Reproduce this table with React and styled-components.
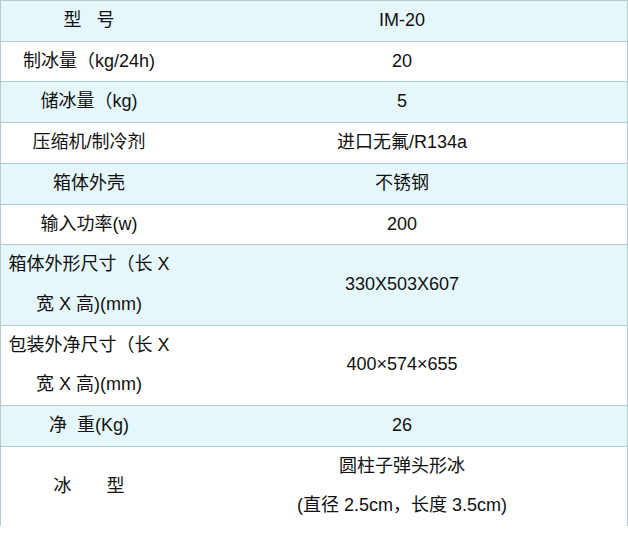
import React from 'react';
import styled, { createGlobalStyle } from 'styled-components';

const GlobalStyle = createGlobalStyle`
  body {
    margin: 0;
    background: #ffffff;
    font-family: "Liberation Sans", Arial, "Noto Sans CJK SC", sans-serif;
  }
`;

const SpecTable = styled.div`
  width: 628px;
  box-sizing: border-box;
  border: 1px solid #b3cad4;
  border-bottom: none;
  color: #111;
  font-size: 18px;
  line-height: 39.7px;
`;

const Row = styled.div`
  display: grid;
  grid-template-columns: 176px 1fr;
  background: ${(p) => (p.$shaded ? '#e6f7fc' : '#ffffff')};
  border-bottom: ${(p) => (p.$last ? 'none' : '1px solid #b3cad4')};
`;

const Cell = styled.div`
  display: flex;
  flex-direction: column;
  align-items: center;
  justify-content: center;
  text-align: center;
`;

const specs = [
  { label: '型\u00a0\u00a0\u00a0号', value: 'IM-20' },
  { label: '制冰量（kg/24h)', value: '20' },
  { label: '储冰量（kg)', value: '5' },
  { label: '压缩机/制冷剂', value: '进口无氟/R134a' },
  { label: '箱体外壳', value: '不锈钢' },
  { label: '输入功率(w)', value: '200' },
  { label: '箱体外形尺寸（长 X 宽 X 高)(mm)', value: '330X503X607' },
  { label: '包装外净尺寸（长 X 宽 X 高)(mm)', value: '400×574×655' },
  { label: '净\u00a0\u00a0重(Kg)', value: '26' },
  {
    label: '冰\u00a0\u00a0\u00a0\u00a0\u00a0\u00a0\u00a0型',
    value: ['圆柱子弹头形冰', '(直径 2.5cm，长度 3.5cm)'],
  },
];

const App = () => (
  <>
    <GlobalStyle />
    <SpecTable>
      {specs.map((s, i) => (
        <Row key={i} $shaded={i % 2 === 0} $last={i === specs.length - 1}>
          <Cell>{s.label}</Cell>
          <Cell>
            {Array.isArray(s.value)
              ? s.value.map((line) => <span key={line}>{line}</span>)
              : s.value}
          </Cell>
        </Row>
      ))}
    </SpecTable>
  </>
);

export default App;
